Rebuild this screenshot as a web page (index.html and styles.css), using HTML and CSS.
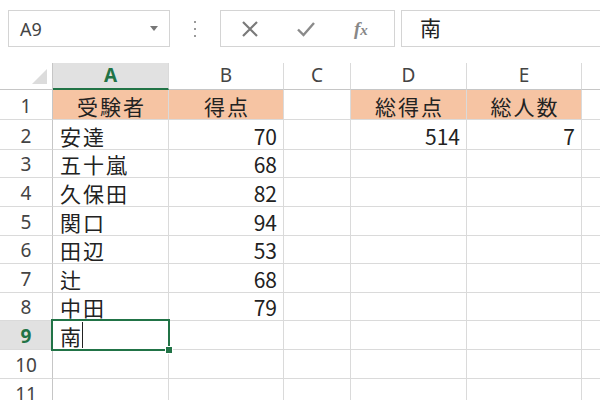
FILE: index.html
```html
<!DOCTYPE html>
<html lang="ja">
<head>
<meta charset="utf-8">
<title>Excel</title>
<link rel="stylesheet" href="styles.css">
</head>
<body>
<div class="fbar">
  <div class="namebox"><span class="nb-text">A9</span><span class="nb-arrow"></span></div>
  <div class="grip"><span></span><span></span><span></span></div>
  <div class="btns">
    <svg class="ico" width="20" height="20" viewBox="0 0 20 20"><path d="M3 3 L17 17 M17 3 L3 17" stroke="#7a7a7a" stroke-width="2.2" fill="none"/></svg>
    <svg class="ico" width="20" height="20" viewBox="0 0 20 20"><path d="M2 10.5 L7.5 16 L18 4" stroke="#8a8a8a" stroke-width="2.4" fill="none"/></svg>
    <span class="fx">f<span class="fx-x">x</span></span>
  </div>
  <div class="finput">南</div>
</div>
<div class="sheet">
  <div class="corner"><span class="tri"></span></div>
  <div class="ch sel">A</div><div class="ch">B</div><div class="ch">C</div><div class="ch">D</div><div class="ch">E</div><div class="ch last"></div>

  <div class="rh">1</div><div class="c hd">受験者</div><div class="c hd">得点</div><div class="c"></div><div class="c hd">総得点</div><div class="c hd">総人数</div><div class="c last"></div>
  <div class="rh">2</div><div class="c t">安達</div><div class="c n">70</div><div class="c"></div><div class="c n">514</div><div class="c n">7</div><div class="c last"></div>
  <div class="rh">3</div><div class="c t">五十嵐</div><div class="c n">68</div><div class="c"></div><div class="c"></div><div class="c"></div><div class="c last"></div>
  <div class="rh">4</div><div class="c t">久保田</div><div class="c n">82</div><div class="c"></div><div class="c"></div><div class="c"></div><div class="c last"></div>
  <div class="rh">5</div><div class="c t">関口</div><div class="c n">94</div><div class="c"></div><div class="c"></div><div class="c"></div><div class="c last"></div>
  <div class="rh">6</div><div class="c t">田辺</div><div class="c n">53</div><div class="c"></div><div class="c"></div><div class="c"></div><div class="c last"></div>
  <div class="rh">7</div><div class="c t">辻</div><div class="c n">68</div><div class="c"></div><div class="c"></div><div class="c"></div><div class="c last"></div>
  <div class="rh">8</div><div class="c t">中田</div><div class="c n">79</div><div class="c"></div><div class="c"></div><div class="c"></div><div class="c last"></div>
  <div class="rh rsel">9</div><div class="c t active">南<span class="caret"></span></div><div class="c"></div><div class="c"></div><div class="c"></div><div class="c"></div><div class="c last"></div>
  <div class="rh">10</div><div class="c"></div><div class="c"></div><div class="c"></div><div class="c"></div><div class="c"></div><div class="c last"></div>
  <div class="rh">11</div><div class="c"></div><div class="c"></div><div class="c"></div><div class="c"></div><div class="c"></div><div class="c last"></div>
</div>
</body>
</html>
```
FILE: styles.css
```css
html, body {
  margin: 0;
  padding: 0;
  background: #ffffff;
  overflow: hidden;
  width: 600px;
  height: 400px;
}
body {
  font-family: "Noto Sans", "Noto Sans CJK JP", sans-serif;
}
.fbar {
  height: 63px;
  box-sizing: border-box;
  padding: 10px 0 0 8px;
  display: flex;
  align-items: flex-start;
}
.namebox {
  width: 162px;
  height: 37px;
  box-sizing: border-box;
  border: 1px solid #d4d4d4;
  display: flex;
  align-items: center;
  justify-content: space-between;
  padding: 0 11px 0 11px;
}
.nb-text {
  font-size: 18px;
  color: #444;
}
.nb-arrow {
  width: 0;
  height: 0;
  border-left: 4.5px solid transparent;
  border-right: 4.5px solid transparent;
  border-top: 5px solid #777;
}
.grip {
  width: 50px;
  height: 37px;
  display: flex;
  flex-direction: column;
  align-items: center;
  justify-content: center;
  gap: 5px;
}
.grip span {
  width: 2px;
  height: 2px;
  background: #9a9a9a;
}
.btns {
  width: 175px;
  height: 37px;
  box-sizing: border-box;
  border: 1px solid #d4d4d4;
  display: flex;
  align-items: center;
  padding-left: 19px;
}
.ico {
  display: block;
  margin-right: 36px;
}
.ico + .ico {
  margin-right: 38px;
}
.fx {
  font-family: "Liberation Serif", serif;
  font-style: italic;
  font-weight: bold;
  font-size: 19px;
  color: #888;
}
.fx-x {
  font-size: 15px;
}
.finput {
  flex: 1;
  margin-left: 6px;
  margin-right: -10px;
  height: 37px;
  box-sizing: border-box;
  border: 1px solid #d4d4d4;
  font-family: "Noto Sans CJK JP", sans-serif;
  font-size: 21px;
  line-height: 33px;
  padding-left: 18px;
  color: #222;
}
.sheet {
  display: grid;
  grid-template-columns: 53px 116px 115px 67px 116px 115px 1fr;
  grid-template-rows: 27px 30px 30px 28px 29px 29px 28px 29px 28px 29px 29px 29px;
}
.corner {
  border-right: 1px solid #c6c6c6;
  border-bottom: 1px solid #c6c6c6;
  position: relative;
}
.tri {
  position: absolute;
  right: 5px;
  bottom: 5px;
  width: 0;
  height: 0;
  border-left: 15px solid transparent;
  border-bottom: 15px solid #dcdcdc;
}
.ch {
  border-right: 1px solid #dadada;
  border-bottom: 1px solid #c6c6c6;
  font-size: 19px;
  color: #444;
  display: flex;
  justify-content: center;
  align-items: flex-end;
  line-height: 22px;
  padding-bottom: 3px;
  box-sizing: border-box;
}
.ch.sel {
  background: #e1e1e1;
  color: #217346;
  font-weight: bold;
  border-bottom: 2px solid #217346;
  padding-bottom: 2px;
}
.rh {
  border-right: 1px solid #c6c6c6;
  border-bottom: 1px solid #dadada;
  font-size: 19px;
  color: #444;
  display: flex;
  justify-content: center;
  align-items: flex-end;
  line-height: 22px;
  padding-bottom: 2px;
  box-sizing: border-box;
}
.rh.rsel {
  background: #e1e1e1;
  color: #217346;
  font-weight: bold;
}
.c {
  border-right: 1px solid #dadada;
  border-bottom: 1px solid #dadada;
  box-sizing: border-box;
  font-family: "Noto Sans CJK JP", sans-serif;
  font-size: 21px;
  color: #222;
  display: flex;
  align-items: flex-end;
  line-height: 25px;
  padding-bottom: 0;
  white-space: nowrap;
}
.last {
  border-right: none;
}
.c.hd {
  background: #f6c4a3;
  justify-content: center;
  letter-spacing: 2px;
  padding-left: 2px;
}
.c.t {
  padding-left: 7px;
  letter-spacing: 2px;
}
.c.n {
  justify-content: flex-end;
  padding-right: 6px;
}
.c.active {
  position: relative;
}
.c.active::after {
  content: "";
  position: absolute;
  left: -2px;
  top: -2px;
  right: -2px;
  bottom: -2px;
  border: 2px solid #217346;
}
.c.active::before {
  content: "";
  position: absolute;
  right: -5px;
  bottom: -5px;
  width: 6px;
  height: 6px;
  background: #217346;
  border: 1px solid #fff;
  z-index: 2;
}
.caret {
  display: inline-block;
  width: 1px;
  height: 26px;
  background: #222;
  margin-bottom: 1px;
  margin-left: -1px;
}
```
